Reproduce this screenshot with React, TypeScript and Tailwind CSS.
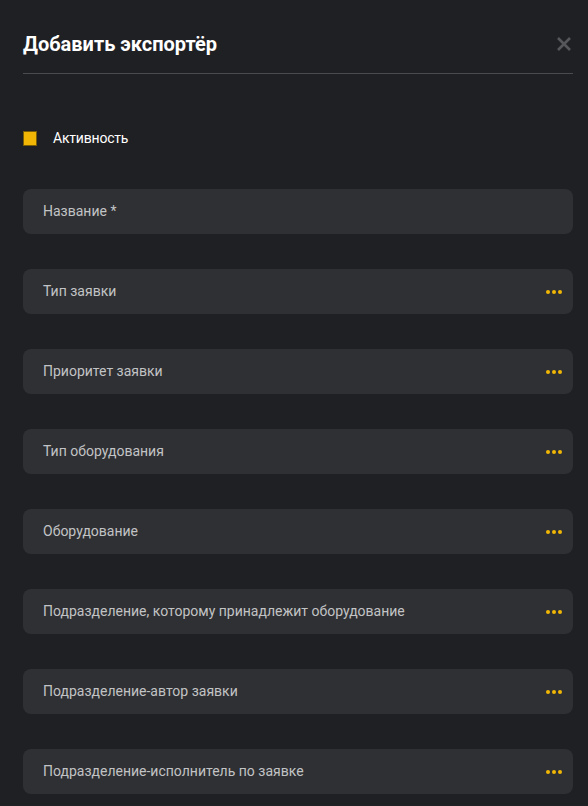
const fields: { label: string; more: boolean }[] = [
  { label: 'Название *', more: false },
  { label: 'Тип заявки', more: true },
  { label: 'Приоритет заявки', more: true },
  { label: 'Тип оборудования', more: true },
  { label: 'Оборудование', more: true },
  { label: 'Подразделение, которому принадлежит оборудование', more: true },
  { label: 'Подразделение-автор заявки', more: true },
  { label: 'Подразделение-исполнитель по заявке', more: true },
];

function Dots() {
  return (
    <div className="flex gap-[2px]">
      <span className="w-[4px] h-[4px] rounded-full bg-[#f2b705]" />
      <span className="w-[4px] h-[4px] rounded-full bg-[#f2b705]" />
      <span className="w-[4px] h-[4px] rounded-full bg-[#f2b705]" />
    </div>
  );
}

export default function App() {
  return (
    <div
      className="min-h-screen bg-[#1f2024] pl-[23px] pr-[15px] pt-[30px] pb-[12px]"
      style={{ fontFamily: 'Roboto, "Noto Sans", sans-serif' }}
    >
      {/* header */}
      <div className="flex items-center justify-between border-b border-[#4a4b4f] pb-[15px]">
        <h2 className="text-[20px] leading-[28px] font-bold text-white">Добавить экспортёр</h2>
        <button aria-label="Закрыть" className="w-[18px] h-[18px] flex items-center justify-center text-[#56575b]">
          <svg viewBox="0 0 16 16" className="w-[16px] h-[16px]" fill="none" stroke="currentColor" strokeWidth={2.6}>
            <path d="M2 2l12 12M14 2L2 14" />
          </svg>
        </button>
      </div>

      {/* checkbox */}
      <label className="flex items-center gap-[16px] mt-[54px] h-[20px]">
        <span className="w-[14px] h-[15px] bg-[#f2b705] border border-[#7a5e05]" />
        <span className="text-[14px] text-white tracking-[-0.2px]">Активность</span>
      </label>

      {/* fields */}
      <div className="flex flex-col gap-[35px] mt-[41px]">
        {fields.map((f) => (
          <div
            key={f.label}
            className="h-[45px] rounded-[8px] bg-[#2f3033] pl-[20px] pr-[11px] flex items-center justify-between"
          >
            <span className="text-[14px] text-[#c2c3c5]">{f.label}</span>
            {f.more && <Dots />}
          </div>
        ))}
      </div>
    </div>
  );
}
